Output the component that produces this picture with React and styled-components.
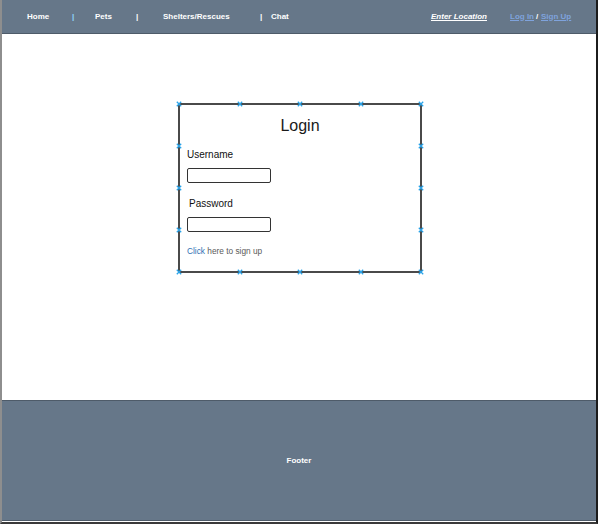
import React from 'react';
import styled, { createGlobalStyle } from 'styled-components';

const GlobalStyle = createGlobalStyle`
  html, body {
    margin: 0;
    padding: 0;
    background: #ffffff;
    overflow: hidden;
  }
  body {
    font-family: "Liberation Sans", Arial, sans-serif;
  }
`;

const Page = styled.div`
  width: 594px;
  height: 522px;
  display: flex;
  flex-direction: column;
  border-left: 2px solid #8e8e8e;
  border-right: 2px solid #1c1c1c;
  border-bottom: 2px solid #3a3a3a;
  background: #ffffff;
`;

const Header = styled.header`
  height: 33px;
  flex-shrink: 0;
  display: flex;
  align-items: center;
  padding-left: 25px;
  background: #667789;
  border-bottom: 1px solid #4e5b69;
  color: #ffffff;
  font-size: 8px;
  font-weight: bold;
`;

// each slot spans from its own start to the start of the next one
const NavItem = styled.a`
  flex: 0 0 ${({ $w }) => ($w ? `${$w}px` : 'auto')};
  color: ${({ $color }) => $color || '#ffffff'};
  font-style: ${({ $italic }) => ($italic ? 'italic' : 'normal')};
  text-decoration: ${({ $underline }) => ($underline ? 'underline' : 'none')};
  white-space: nowrap;
  line-height: 1;
`;

const Sep = styled.span`
  flex: 0 0 ${({ $w }) => $w}px;
  color: ${({ $color }) => $color || '#ffffff'};
  line-height: 1;
`;

const Main = styled.main`
  flex: 1;
  display: flex;
  align-items: flex-start;
  padding: 69px 0 0 176px;
`;

const Box = styled.div`
  position: relative;
  box-sizing: border-box;
  width: 244px;
  height: 170px;
  border: 2px solid #4a4a4a;
  padding: 0 0 0 7px;
  display: flex;
  flex-direction: column;
`;

const Title = styled.h1`
  margin: 12px 0 0 -7px;
  font-size: 16px;
  font-weight: normal;
  text-align: center;
  color: #1a1a1a;
  line-height: 18px;
`;

const Label = styled.label`
  margin: ${({ $top }) => $top}px 0 0 ${({ $indent }) => $indent || 0}px;
  font-size: 10px;
  color: #111;
  line-height: 12px;
`;

const Input = styled.input`
  margin-top: 7px;
  width: 84px;
  height: 15px;
  box-sizing: border-box;
  border: 1.5px solid #333;
  border-radius: 2px;
  background: #fff;
  padding: 0;
`;

const SignUpHint = styled.p`
  margin: 14px 0 0;
  font-size: 8.3px;
  color: #5a5a5a;
  line-height: 10px;
`;

const ClickWord = styled.span`
  color: #2f6fb3;
`;

const Handle = styled.svg`
  position: absolute;
  width: 6px;
  height: 6px;
  left: ${({ $x }) => $x}px;
  top: ${({ $y }) => $y}px;
`;

const Footer = styled.footer`
  height: 119px;
  flex-shrink: 0;
  display: flex;
  align-items: center;
  justify-content: center;
  background: #667789;
  border-top: 1px solid #4e5b69;
  border-bottom: 1px solid #4e5b69;
  margin-bottom: 1px;
  color: #ffffff;
  font-size: 8px;
  font-weight: bold;
`;

const handleSpots = [
  [0, 0], [60.5, 0], [121, 0], [181.5, 0], [242, 0],
  [0, 42], [242, 42], [0, 84], [242, 84], [0, 126], [242, 126],
  [0, 168], [60.5, 168], [121, 168], [181.5, 168], [242, 168],
];

const SelectionHandle = ({ x, y }) => (
  <Handle $x={x - 4} $y={y - 4} viewBox="0 0 6 6">
    <path d="M0.8 0.8 L5.2 5.2 M5.2 0.8 L0.8 5.2" stroke="#2aa3e8" strokeWidth="1.3" />
  </Handle>
);

const App = () => (
  <>
    <GlobalStyle />
    <Page>
      <Header>
        <NavItem $w={45}>Home</NavItem>
        <Sep $w={23} $color="#8fd8ff">|</Sep>
        <NavItem $w={41}>Pets</NavItem>
        <Sep $w={27}>|</Sep>
        <NavItem $w={97}>Shelters/Rescues</NavItem>
        <Sep $w={11}>|</Sep>
        <NavItem $w={160}>Chat</NavItem>
        <NavItem $w={79} $italic $underline>Enter Location</NavItem>
        <NavItem $w={26} $color="#7fa3dc" $underline>Log In</NavItem>
        <Sep $w={5}>/</Sep>
        <NavItem $color="#7fa3dc" $underline>Sign Up</NavItem>
      </Header>
      <Main>
        <Box>
          <Title>Login</Title>
          <Label $top={14}>Username</Label>
          <Input type="text" />
          <Label $top={15} $indent={2}>Password</Label>
          <Input type="password" />
          <SignUpHint>
            <ClickWord>Click</ClickWord> here to sign up
          </SignUpHint>
          {handleSpots.map(([x, y]) => (
            <SelectionHandle key={`${x}-${y}`} x={x} y={y} />
          ))}
        </Box>
      </Main>
      <Footer>Footer</Footer>
    </Page>
  </>
);

export default App;
